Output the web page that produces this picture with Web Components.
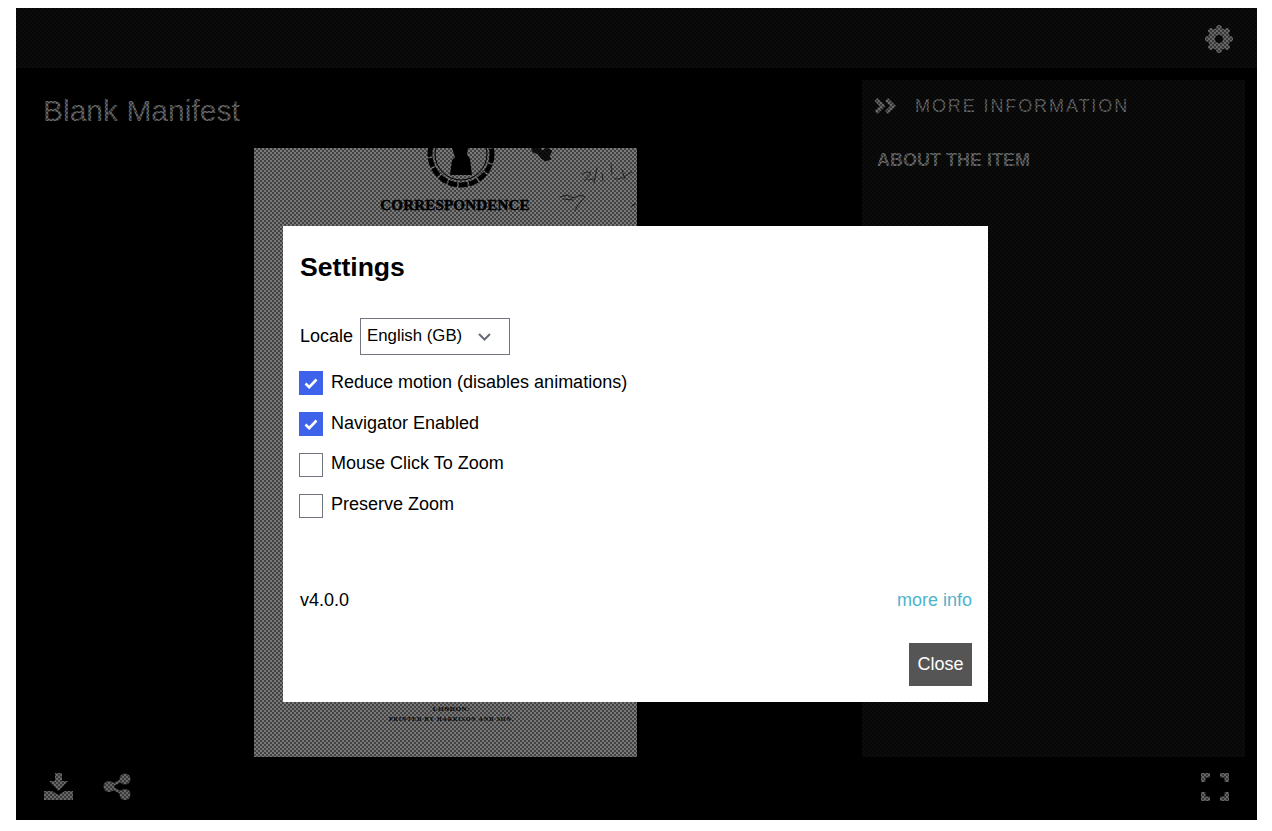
<!DOCTYPE html>
<html lang="en">
<head>
<meta charset="utf-8">
<title>Blank Manifest</title>
<style>
  html, body { height: 100%; }
  body {
    margin: 0;
    padding: 8px 15px 11px 16px;
    box-sizing: border-box;
    background: #fff;
    font-family: "Liberation Sans", Arial, sans-serif;
  }
</style>
</head>
<body>
<viewer-app>
  <top-bar slot="top"></top-bar>
  <viewer-title slot="left">Blank Manifest</viewer-title>
  <doc-page slot="left"></doc-page>
  <info-panel slot="right" heading="More Information" section="About the item"></info-panel>
  <bottom-bar slot="bottom"></bottom-bar>
  <settings-dialog slot="overlay" heading="Settings">
    <locale-row label="Locale" value="English (GB)"></locale-row>
    <check-row checked>Reduce motion (disables animations)</check-row>
    <check-row checked>Navigator Enabled</check-row>
    <check-row>Mouse Click To Zoom</check-row>
    <check-row>Preserve Zoom</check-row>
  </settings-dialog>
</viewer-app>

<script>
class ViewerApp extends HTMLElement {
  constructor() {
    super();
    this.attachShadow({ mode: 'open' });
    this.shadowRoot.innerHTML = /* html */`
    <style>
      :host {
        display: flex;
        flex-direction: column;
        position: relative;
        height: 812px;
        background: #000;
        overflow: hidden;
      }
      .main { flex: 1; display: flex; min-height: 0; }
      .left { flex: 1; display: flex; flex-direction: column; min-width: 0; }
      .right { display: flex; padding: 12px 12px 0 0; }
      .overlay {
        position: absolute;
        inset: 0;
        display: flex;
        justify-content: center;
        align-items: flex-start;
        padding: 218px 2px 0 0;
        box-sizing: border-box;
        background: rgba(0, 0, 0, 0.45);
      }
      .dither { position: absolute; inset: 0; width: 100%; height: 100%; }
      ::slotted([slot="overlay"]) { position: relative; }
    </style>
    <slot name="top"></slot>
    <div class="main">
      <div class="left"><slot name="left"></slot></div>
      <div class="right"><slot name="right"></slot></div>
    </div>
    <slot name="bottom"></slot>
    <div class="overlay">
      <svg class="dither" shape-rendering="crispEdges">
        <defs>
          <pattern id="checker" width="4" height="4" patternUnits="userSpaceOnUse">
            <rect width="2" height="2" fill="#000" fill-opacity="0.45"/>
            <rect x="2" y="2" width="2" height="2" fill="#000" fill-opacity="0.45"/>
          </pattern>
        </defs>
        <rect width="100%" height="100%" fill="url(#checker)"/>
      </svg>
      <slot name="overlay"></slot>
    </div>`;
  }
}

class TopBar extends HTMLElement {
  constructor() {
    super();
    this.attachShadow({ mode: 'open' });
    const teeth = [0, 45, 90, 135, 180, 225, 270, 315]
      .map(a => `<line x1="14" y1="5" x2="14" y2="2.5" transform="rotate(${a} 14 14)"/>`)
      .join('');
    this.shadowRoot.innerHTML = /* html */`
    <style>
      :host {
        display: flex;
        justify-content: flex-end;
        align-items: center;
        height: 60px;
        padding-right: 24px;
        box-sizing: border-box;
        background: #161616;
      }
      svg { display: block; margin-top: 1px; }
    </style>
    <svg width="28" height="28" viewBox="0 0 28 28" fill="none" stroke="#bcbcbc">
      <circle cx="14" cy="14" r="7.5" stroke-width="7"/>
      <g stroke-width="5.4" stroke-linecap="round">${teeth}</g>
    </svg>`;
  }
}

class ViewerTitle extends HTMLElement {
  constructor() {
    super();
    this.attachShadow({ mode: 'open' });
    this.shadowRoot.innerHTML = /* html */`
    <style>
      :host {
        display: block;
        padding: 27px 0 0 27px;
        height: 80px;
        box-sizing: border-box;
        font-size: 30px;
        line-height: 32px;
        color: #bcbcbc;
      }
    </style>
    <slot></slot>`;
  }
}

class DocPage extends HTMLElement {
  constructor() {
    super();
    this.attachShadow({ mode: 'open' });
    this.shadowRoot.innerHTML = /* html */`
    <style>
      :host {
        display: flex;
        flex-direction: column;
        align-items: center;
        position: relative;
        width: 383px;
        height: 609px;
        margin-left: 238px;
        box-sizing: border-box;
        background: #dcdcdc;
        color: #000;
        font-family: "Liberation Serif", "Times New Roman", serif;
        overflow: hidden;
      }
      .seal { display: block; margin-left: 31px; }
      .title {
        margin: 6px 0 0 19px;
        font-size: 15px;
        line-height: 18px;
        font-weight: bold;
        letter-spacing: 0.2px;
        -webkit-text-stroke: 0.5px #000;
      }
      .imprint {
        margin: auto 0 33px 12px;
        text-align: center;
        font-weight: bold;
      }
      .city { font-size: 7px; line-height: 10px; letter-spacing: 0.6px; }
      .printer { font-size: 6px; line-height: 10px; letter-spacing: 0.9px; }
      .notes { position: absolute; left: 270px; top: 0; }
    </style>
    <svg class="seal" width="76" height="42" viewBox="0 0 76 42" fill="none">
      <circle cx="38" cy="6" r="31" stroke="#000" stroke-width="5" stroke-dasharray="9 1.5"/>
      <circle cx="38" cy="6" r="26" stroke="#000" stroke-width="1"/>
      <path d="M29 0h16l-1 7 3 4 2 16h-22l2-15 3-3z" fill="#000"/>
    </svg>
    <svg class="notes" width="113" height="70" viewBox="0 0 113 70" fill="none" stroke="#444" stroke-linecap="round">
      <path d="M8 0h8l2 3 5-3 5 3-3 5 2 3-6 2-4-3-3-4-5-2z" fill="#222" stroke="#222" stroke-width="1"/>
      <path d="M58 26c5-3 8-2 9-1l-7 8M64 32l6-1M73 20l-3 15M78 25l1 8M87 16l1 10M90 30c6 4 11-3 18-6M98 22l3 9" stroke-width="0.9"/>
      <path d="M36 49l7-2 6 3 8-3 4 2-7 8-3 5M39 51l10 1" stroke-width="1"/>
      <path d="M108 58l3-2" stroke-width="1.500"/>
    </svg>
    <div class="title">CORRESPONDENCE</div>
    <div class="imprint">
      <div class="city">LONDON:</div>
      <div class="printer">PRINTED BY HARRISON AND SON.</div>
    </div>`;
  }
}

class InfoPanel extends HTMLElement {
  constructor() {
    super();
    this.attachShadow({ mode: 'open' });
    this.shadowRoot.innerHTML = /* html */`
    <style>
      :host {
        display: block;
        width: 383px;
        box-sizing: border-box;
        background: #161616;
        color: #bcbcbc;
      }
      .head { display: flex; align-items: center; gap: 18px; height: 52px; padding-left: 11px; }
      svg { display: block; }
      h2 {
        margin: 0;
        font-size: 18px;
        font-weight: normal;
        letter-spacing: 1.900px;
        text-transform: uppercase;
      }
      h3 {
        margin: 16px 0 0 15px;
        font-size: 18px;
        line-height: 24px;
        font-weight: bold;
        text-transform: uppercase;
      }
    </style>
    <div class="head">
      <svg width="24" height="16" viewBox="0 0 24 16" fill="none" stroke="#bcbcbc" stroke-width="4.200">
        <path d="M3 1.500L9.500 8 3 14.500M13.500 1.500L20 8l-6.500 6.500"/>
      </svg>
      <h2>${this.getAttribute('heading')}</h2>
    </div>
    <h3>${this.getAttribute('section')}</h3>`;
  }
}

class BottomBar extends HTMLElement {
  constructor() {
    super();
    this.attachShadow({ mode: 'open' });
    this.shadowRoot.innerHTML = /* html */`
    <style>
      :host {
        display: flex;
        align-items: center;
        justify-content: space-between;
        height: 63px;
        padding: 0 28px 4px 27px;
        box-sizing: border-box;
      }
      .group { display: flex; align-items: center; gap: 29px; }
      svg { display: block; }
    </style>
    <div class="group">
      <svg width="31" height="28" viewBox="0 0 31 28" fill="#bcbcbc">
        <path d="M12 0h7v8h6l-9.500 10L6 8h6z"/>
        <path d="M1 18h8l6.500 4 6.500-4h8v9H1z"/>
      </svg>
      <svg width="29" height="28" viewBox="0 0 29 28" fill="#bcbcbc" stroke="#bcbcbc">
        <circle cx="22" cy="6" r="5.500" stroke="none"/>
        <circle cx="6" cy="13.500" r="5.500" stroke="none"/>
        <circle cx="22" cy="21.500" r="5.500" stroke="none"/>
        <path d="M22 6L6 13.500l16 8" fill="none" stroke-width="3"/>
      </svg>
    </div>
    <svg width="28" height="28" viewBox="0 0 28 28" fill="#bcbcbc">
      <path d="M0 0h9v4.500H4.500V9H0zM19 0h9v9h-4.500V4.500H19zM0 19h4.500v4.500H9V28H0zM23.500 19H28v9h-9v-4.500h4.500z"/>
    </svg>`;
  }
}

class SettingsDialog extends HTMLElement {
  constructor() {
    super();
    this.attachShadow({ mode: 'open' });
    this.shadowRoot.innerHTML = /* html */`
    <style>
      :host {
        display: flex;
        flex-direction: column;
        width: 705px;
        height: 476px;
        padding: 26px 16px 16px 17px;
        box-sizing: border-box;
        background: #fff;
        color: #000;
        font-size: 18px;
      }
      h2 { margin: 0; font-size: 26.600px; line-height: 30px; font-weight: bold; }
      .rows { display: flex; flex-direction: column; margin-top: 36px; }
      .meta {
        display: flex;
        justify-content: space-between;
        margin-top: auto;
        line-height: 22px;
      }
      a { color: #4fb3cd; text-decoration: none; }
      .actions { display: flex; justify-content: flex-end; margin-top: 32px; }
      button {
        height: 43px;
        width: 63px;
        padding: 0;
        border: 0;
        background: #555;
        color: #fff;
        font: inherit;
      }
    </style>
    <h2>${this.getAttribute('heading')}</h2>
    <div class="rows"><slot></slot></div>
    <div class="meta"><span>v4.0.0</span><a href="#">more info</a></div>
    <div class="actions"><button type="button">Close</button></div>`;
  }
}

class LocaleRow extends HTMLElement {
  constructor() {
    super();
    this.attachShadow({ mode: 'open' });
    this.shadowRoot.innerHTML = /* html */`
    <style>
      :host { display: flex; align-items: center; gap: 7px; margin-bottom: 16px; }
      .box { position: relative; display: flex; }
      select {
        appearance: none;
        width: 150px;
        height: 37px;
        margin: 0;
        padding: 0 0 2px 6px;
        border: 1px solid #70757f;
        border-radius: 0;
        background: #fff;
        color: #000;
        font: inherit;
        font-size: 16.800px;
      }
      svg { position: absolute; right: 19px; top: 15px; pointer-events: none; }
    </style>
    <label for="locale">${this.getAttribute('label')}</label>
    <span class="box">
      <select id="locale"><option>${this.getAttribute('value')}</option></select>
      <svg width="13" height="8" viewBox="0 0 13 8" fill="none" stroke="#666b75" stroke-width="2">
        <path d="M1 1l5.500 5.500L12 1"/>
      </svg>
    </span>`;
  }
}

class CheckRow extends HTMLElement {
  constructor() {
    super();
    this.attachShadow({ mode: 'open' });
    this.shadowRoot.innerHTML = /* html */`
    <style>
      :host { display: block; height: 41px; }
      label { display: flex; align-items: flex-start; gap: 8px; line-height: 22px; }
      :host(:not([checked])) .text { margin-top: -1px; }
      .box { position: relative; display: block; width: 24px; height: 24px; flex: none; margin-left: -1px; }
      input {
        appearance: none;
        display: block;
        width: 24px;
        height: 24px;
        margin: 0;
        border: 1px solid #70757f;
        border-radius: 0;
        background: #fff;
      }
      input:checked { border-color: #3e63ea; background: #3e63ea; }
      svg { display: none; position: absolute; left: 5px; top: 7px; pointer-events: none; }
      input:checked + svg { display: block; }
    </style>
    <label>
      <span class="box">
        <input type="checkbox" ${this.hasAttribute('checked') ? 'checked' : ''}>
        <svg width="14" height="11" viewBox="0 0 14 11" fill="none" stroke="#fff" stroke-width="2.600">
          <path d="M1.500 5.500l3.700 3.700L12.500 1.500"/>
        </svg>
      </span>
      <span class="text"><slot></slot></span>
    </label>`;
  }
}

customElements.define('viewer-app', ViewerApp);
customElements.define('top-bar', TopBar);
customElements.define('viewer-title', ViewerTitle);
customElements.define('doc-page', DocPage);
customElements.define('info-panel', InfoPanel);
customElements.define('bottom-bar', BottomBar);
customElements.define('settings-dialog', SettingsDialog);
customElements.define('locale-row', LocaleRow);
customElements.define('check-row', CheckRow);
</script>
</body>
</html>
